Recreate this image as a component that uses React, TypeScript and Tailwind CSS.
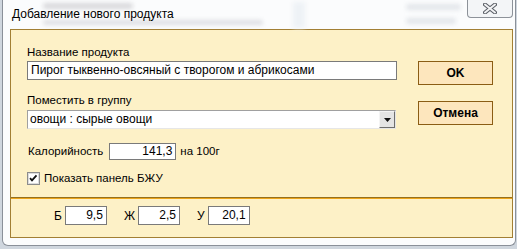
import React from "react";

// Classic Windows-style textbox
function TextBox({
  value,
  className = "",
  right = false,
}: {
  value: string;
  className?: string;
  right?: boolean;
}) {
  return (
    <div
      className={`border border-[#7a7a7a] bg-white px-[3px] text-[12px] text-black whitespace-nowrap overflow-hidden ${
        right ? "text-right" : ""
      } ${className}`}
    >
      {value}
    </div>
  );
}

function ComboBox({ value }: { value: string }) {
  return (
    <div className="flex h-[19px] w-[369px] border border-t-[#a0a0a0] border-l-[#a0a0a0] border-b-[#e6e6e6] border-r-[#e6e6e6] bg-white">
      <div className="flex-1 px-[2px] text-[12px] leading-[16px] text-black">{value}</div>
      <div className="flex w-[16px] items-center justify-center border border-t-[#f4f4f4] border-l-[#f4f4f4] border-b-[#6e6e6e] border-r-[#6e6e6e] bg-[#e4e4e4]">
        <svg width="7" height="4" viewBox="0 0 7 4" aria-hidden>
          <path d="M0 0h7L3.5 4z" fill="#111" />
        </svg>
      </div>
    </div>
  );
}

function DialogButton({ label }: { label: string }) {
  return (
    <div className="flex h-[24px] w-[75px] items-center justify-center border border-[#8b5d14] bg-[#fde6bd] text-[12px] font-bold text-black">
      {label}
    </div>
  );
}

function CheckBox() {
  return (
    <svg width="13" height="13" viewBox="0 0 13 13" aria-hidden>
      <rect x="0.5" y="0.5" width="12" height="12" fill="#fff" stroke="#8c8c8c" />
      <rect x="1.5" y="1.5" width="10" height="10" fill="#fff" stroke="#dcdcdc" />
      <path d="M3 6.2l2 2.2 4.5-5" fill="none" stroke="#111" strokeWidth="1.8" />
    </svg>
  );
}

function CloseGlyph() {
  return (
    <svg width="14" height="11" viewBox="0 0 14 11" aria-hidden>
      <path
        d="M2 1.5L12 9.5M12 1.5L2 9.5"
        stroke="#5a5f66"
        strokeWidth="4"
        strokeLinecap="round"
      />
      <path
        d="M2 1.5L12 9.5M12 1.5L2 9.5"
        stroke="#f2f3f5"
        strokeWidth="2"
        strokeLinecap="round"
      />
    </svg>
  );
}

function Macro({ label, value }: { label: string; value: string }) {
  return (
    <div className="flex items-center gap-[3px]">
      <span className="text-[12px] text-black">{label}</span>
      <TextBox value={value} right className="h-[19px] w-[42px] leading-[17px]" />
    </div>
  );
}

export default function App() {
  return (
    <div className="relative h-[249px] w-[517px] overflow-hidden bg-[#cfd6de] font-['Liberation_Sans',Arial,sans-serif]">
      <div className="relative ml-[2px] h-[246px] w-[514px] rounded-b-[6px] border border-t-0 border-[#8a9099] bg-[#fbfcfd]">
        {/* blurred content behind the glass frame */}
        <div className="absolute left-[40px] top-[3px] h-[6px] w-[90px] rounded-full bg-[#d9d9dc] blur-[2px]" aria-hidden />
        <div className="absolute left-[40px] top-[20px] h-[5px] w-[220px] rounded-full bg-[#dedfe3] blur-[2px]" aria-hidden />
        <div className="absolute left-[290px] top-[2px] h-[26px] w-[12px] bg-[#eef2f6] blur-[2px]" aria-hidden />
        <div className="absolute left-[403px] top-[4px] h-[6px] w-[55px] rounded-full bg-[#e3e6ea] blur-[2px]" aria-hidden />
        <div className="absolute left-[403px] top-[18px] h-[6px] w-[50px] rounded-full bg-[#e3e6ea] blur-[2px]" aria-hidden />

        {/* close button */}
        <div className="absolute right-[2px] top-0 flex h-[18px] w-[46px] items-center justify-center rounded-b-[4px] border border-t-0 border-[#8d9299] bg-[#f3f5f7]">
          <CloseGlyph />
        </div>

        <div className="relative flex h-[29px] items-center pl-[9px] pb-[1px] text-[12px] text-black">
          Добавление нового продукта
        </div>

        <div className="ml-[7px] w-[503px] border border-[#a27f34] bg-[#fdf1c7]">
          <div className="flex h-[167px] pl-[16px]">
            <div className="flex w-[370px] flex-col text-[11.5px]">
              <div className="mt-[15px] h-[14px] leading-[14px] text-black">
                Название продукта
              </div>
              <TextBox
                value="Пирог тыквенно-овсяный с творогом и абрикосами"
                className="mt-[2px] h-[19px] leading-[17px]"
              />
              <div className="mt-[13px] h-[14px] leading-[14px] text-black">
                Поместить в группу
              </div>
              <div className="mt-[3px]">
                <ComboBox value="овощи : сырые овощи" />
              </div>
              <div className="mt-[14px] flex h-[17px] items-center text-black">
                <span className="pl-[1px]">Калорийность</span>
                <TextBox value="141,3" right className="ml-[6px] h-[17px] w-[67px] leading-[15px]" />
                <span className="ml-[4px]">на 100г</span>
              </div>
              <div className="mt-[12px] flex h-[13px] items-center gap-[4px] text-black">
                <CheckBox />
                <span>Показать панель БЖУ</span>
              </div>
            </div>
            <div className="ml-[21px] flex flex-col gap-[16px] pt-[31px]">
              <DialogButton label="OK" />
              <DialogButton label="Отмена" />
            </div>
          </div>

          <div className="border-t border-b border-t-[#94701f] border-b-[#eda41a]" />

          <div className="flex h-[38px] items-start gap-[17px] pl-[43px] pt-[7px]">
            <Macro label="Б" value="9,5" />
            <Macro label="Ж" value="2,5" />
            <Macro label="У" value="20,1" />
          </div>
        </div>
      </div>
    </div>
  );
}
